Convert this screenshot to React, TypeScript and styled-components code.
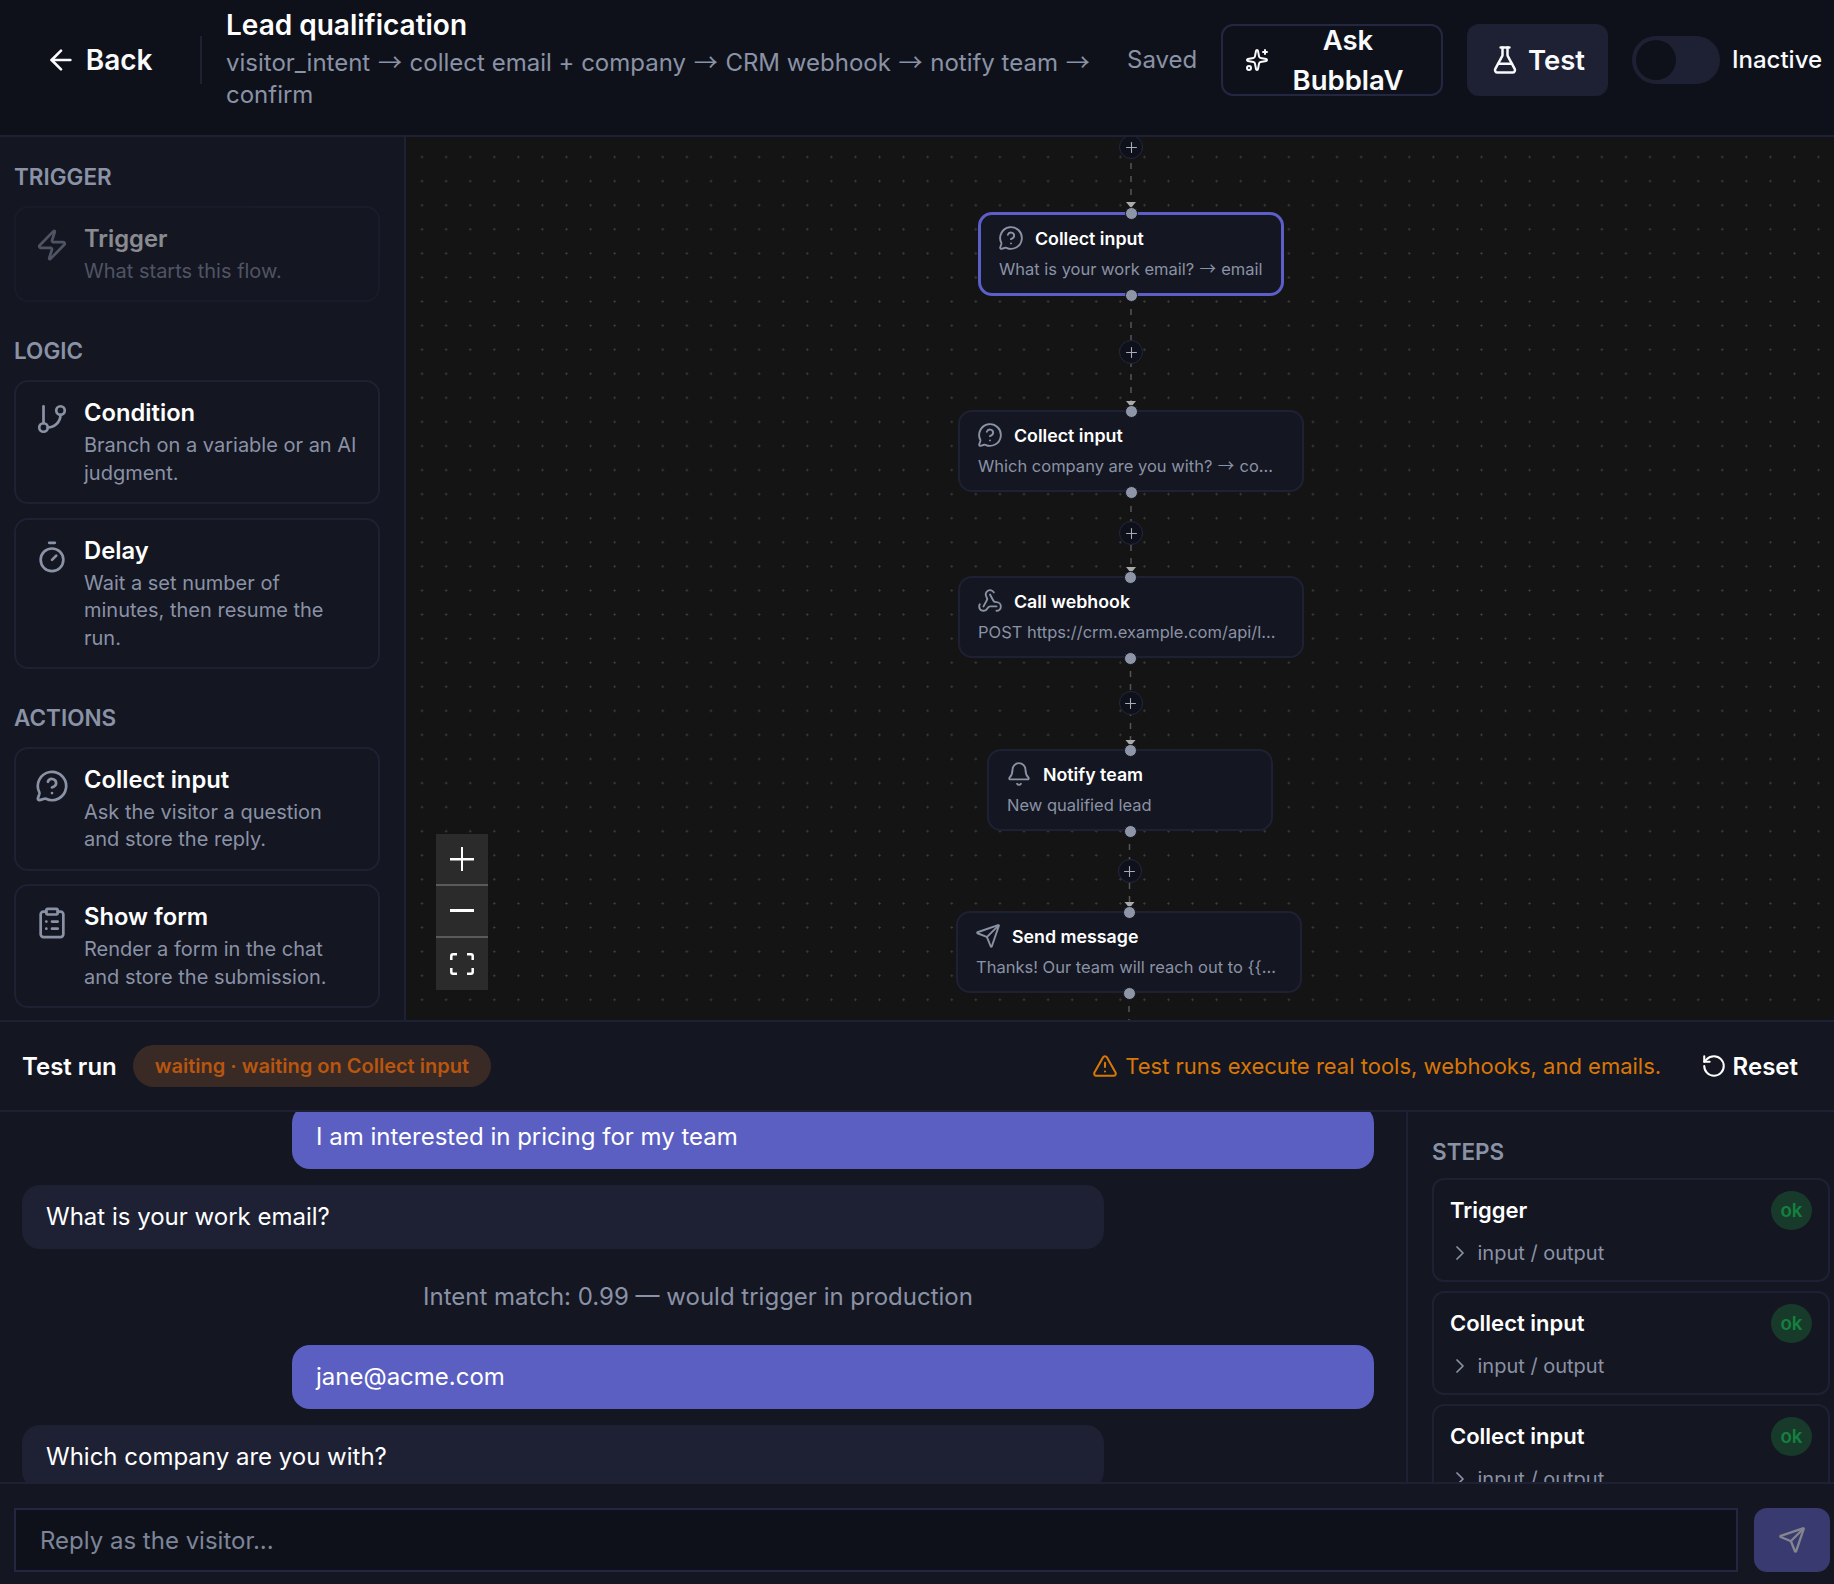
import React from "react";
import styled, { createGlobalStyle } from "styled-components";
import {
  ArrowLeft, Sparkles, FlaskConical, Zap, GitBranch, Timer, MessageCircleQuestion,
  ClipboardList, Webhook, Bell, Send, Plus, TriangleAlert, RotateCcw, ChevronRight,
} from "lucide-react";

const Global = createGlobalStyle`
  html, body { margin: 0; padding: 0; background: #141621; }
  * { box-sizing: border-box; }
  body { font-family: Inter, "Noto Sans", "Liberation Sans", sans-serif; color: #f8fafc; }
`;

const Page = styled.div`
  width: 1834px; height: 1584px; display: flex; flex-direction: column; overflow: hidden; background: #141621;
`;
const Arrow = styled.span`
  font-family: "Noto Sans CJK SC", sans-serif;
  margin: 0 0.04em;
  line-height: 0;
`;

/* header */
const Header = styled.header`
  height: 137px; flex: none; display: flex; align-items: center; background: #0f111a;
  border-bottom: 2px solid #1e2133; padding: 0 12px 16px 44.7px;
`;
const BackButton = styled.div`
  display: flex; align-items: center; gap: 9px; font-size: 28px; font-weight: 600; width: 155.3px; flex: none;
`;
const Divider = styled.div`
  width: 2px; height: 48px; background: #1e2133; flex: none; margin-right: 24px;
`;
const TitleBlock = styled.div`
  flex: none; width: 877px; align-self: flex-start; padding-top: 8px;
`;
const Title = styled.div`
  font-size: 28px; font-weight: 600; line-height: 34px; color: #fff; margin-bottom: 5px;
`;
const Subtitle = styled.div`
  font-size: 24px; line-height: 32px; color: #8a92a6;
`;
const Saved = styled.div`
  font-size: 24px; color: #8a92a6; margin-left: 24px; width: 70px; flex: none;
`;
const AskButton = styled.div`
  margin-left: 24px; width: 222px; height: 72px; flex: none; display: flex; align-items: center; gap: 7px;
  border: 2px solid #232741; border-radius: 12px; padding: 0 21px 0 22px; font-size: 27.5px; font-weight: 600;
`;
const AskText = styled.div`
  flex: 1; text-align: center; line-height: 40px;
`;
const TestButton = styled.div`
  margin-left: 24px; width: 141px; height: 72px; flex: none; display: flex; align-items: center; justify-content: center; gap: 8px;
  background: #1e2133; border-radius: 12px; font-size: 27.5px; font-weight: 600;
`;
const Toggle = styled.div`
  margin-left: 24px; width: 88px; height: 48px; flex: none; border-radius: 24px; background: #1e2133; padding: 4px;
`;
const Thumb = styled.div`
  width: 40px; height: 40px; border-radius: 50%; background: #0f111a;
`;
const ToggleLabel = styled.div`
  margin-left: 12px; font-size: 24px; font-weight: 500; white-space: nowrap;
`;

/* main */
const Main = styled.div`
  height: 883px; flex: none; display: flex;
`;
const Sidebar = styled.aside`
  width: 406px; flex: none; border-right: 2px solid #1e2133; background: #141621; padding: 27px 24px 0 14px; overflow: hidden;
`;
const SectionLabel = styled.div`
  font-size: 22.5px; font-weight: 600; line-height: 26px; color: #8a92a6;
`;
const CardList = styled.div`
  display: flex; flex-direction: column; gap: 13.5px; margin: 16px 0 36px;
`;
const PaletteCard = styled.div<{ $disabled?: boolean }>`
  display: flex; gap: 15.5px; padding: 16px 18px 15px 18.5px; border: 2px solid #1e2133; border-radius: 14px;
  opacity: ${(p) => (p.$disabled ? 0.5 : 1)};
  svg { flex: none; color: #8a92a6; margin-top: 4px; }
`;
const CardTitle = styled.div`
  font-size: 23.75px; font-weight: 600; line-height: 30px; color: #fff; margin-bottom: 4px;
`;
const CardDesc = styled.div`
  font-size: 20px; line-height: 27.4px; color: #8a92a6;
`;

/* canvas */
const Canvas = styled.div`
  flex: 1; position: relative; overflow: hidden; background-color: #141414;
  background-image: radial-gradient(circle at center, #3e3e3e 0.9px, transparent 1.2px);
  background-size: 24.08px 24.08px;
  background-position: 4px 8px;
`;
const EdgeLayer = styled.svg`
  position: absolute; left: 0; top: 0; width: 100%; height: 100%;
`;
const Node = styled.div<{ $x: number; $y: number; $w: number; $h: number; $selected?: boolean }>`
  position: absolute; left: ${(p) => p.$x - 406}px; top: ${(p) => p.$y - 137}px; width: ${(p) => p.$w}px; height: ${(p) => p.$h}px;
  background: #141621; border-radius: 14px; padding: 0 18px;
  border: ${(p) => (p.$selected ? "3px solid #5b5fc7" : "2px solid #1e2133")};
`;
const NodeHead = styled.div`
  display: flex; align-items: center; gap: 11px; height: 24px; margin-top: 11px;
  font-size: 17.8px; font-weight: 600; color: #fff;
  svg { color: #8a92a6; flex: none; margin-left: -1px; }
`;
const NodeDesc = styled.div`
  margin-top: 7px; font-size: 16.5px; line-height: 24px; color: #8a92a6; white-space: nowrap;
`;
const Handle = styled.div<{ $x: number; $y: number }>`
  position: absolute; left: ${(p) => p.$x - 406 - 6.5}px; top: ${(p) => p.$y - 137 - 6.5}px; width: 13px; height: 13px;
  border-radius: 50%; background: #8e95a6; border: 1.5px solid #141621;
`;
const AddButton = styled.div<{ $x: number; $y: number }>`
  position: absolute; left: ${(p) => p.$x - 406 - 12}px; top: ${(p) => p.$y - 137 - 12}px; width: 24px; height: 24px;
  border-radius: 50%; background: #0f111a; border: 1.5px solid #232741; display: flex; align-items: center; justify-content: center;
  color: #a5acbd;
`;
const ZoomControls = styled.div`
  position: absolute; left: 30px; top: 697px; width: 52px; display: flex; flex-direction: column; background: #2b2b2b;
`;
const ZoomButton = styled.div`
  height: 52px; display: flex; align-items: center; justify-content: center; color: #fff;
  &:not(:last-child) { border-bottom: 2px solid #5a5a5a; }
`;

/* test panel */
const Panel = styled.section`
  flex: 1; min-height: 0; display: flex; flex-direction: column; border-top: 2px solid #1e2133; background: #141621;
`;
const PanelHead = styled.div`
  height: 90px; flex: none; display: flex; align-items: center; padding: 0 36px 0 22px; border-bottom: 2px solid #1e2133;
`;
const PanelTitle = styled.div`
  font-size: 24px; font-weight: 600; color: #fff;
`;
const StatusBadge = styled.div`
  margin-left: 16px; height: 42px; border-radius: 21px; background: #3a2a26; color: #b8560f; padding: 0 22px;
  display: flex; align-items: center; font-size: 20px; font-weight: 600;
`;
const Warning = styled.div`
  margin-left: auto; display: flex; align-items: center; gap: 7px; color: #d97706; font-size: 22px;
`;
const ResetButton = styled.div`
  margin-left: 39.5px; display: flex; align-items: center; gap: 6px; font-size: 24px; font-weight: 600; color: #fff;
`;
const PanelBody = styled.div`
  flex: 1; min-height: 0; display: flex;
`;
const Chat = styled.div`
  width: 1406px; flex: none; overflow: hidden; padding: 0 32px 0 22px; display: flex; flex-direction: column; gap: 16px;
`;
const Bubble = styled.div<{ $user?: boolean }>`
  flex: none; width: 1082px; height: 64px; padding: 0 24px 2px; display: flex; align-items: center; border-radius: 18px;
  font-size: 24px; color: #fff;
  background: ${(p) => (p.$user ? "#5b5fc2" : "#1e2133")};
  align-self: ${(p) => (p.$user ? "flex-end" : "flex-start")};
  &:first-child { margin-top: -7px; }
`;
const Meta = styled.div`
  flex: none; height: 64px; padding-bottom: 2px; display: flex; align-items: center; justify-content: center; font-size: 24px; color: #8a92a6;
`;
const Steps = styled.div`
  flex: 1; min-width: 0; overflow: hidden; border-left: 2px solid #1e2133; padding: 27px 4px 0 24px;
`;
const StepsList = styled.div`
  margin-top: 13px; display: flex; flex-direction: column; gap: 9px;
`;
const StepCard = styled.div`
  flex: none; height: 104px; border: 2px solid #1e2133; border-radius: 12px; padding: 10px 16px 0 16px;
`;
const StepHead = styled.div`
  display: flex; align-items: center; justify-content: space-between; font-size: 22px; font-weight: 600; height: 40px; color: #fff;
`;
const OkBadge = styled.div`
  width: 41px; height: 39px; border-radius: 50%; background: #173a2b; color: #15803d; display: flex; align-items: center; justify-content: center;
  font-size: 18.7px; font-weight: 600;
`;
const StepIO = styled.div`
  display: flex; align-items: center; gap: 5.5px; margin-top: 3px; margin-left: -2px; height: 40px; font-size: 20px; color: #8a92a6;
`;
const InputRow = styled.div`
  height: 102px; flex: none; border-top: 2px solid #1e2133; display: flex; gap: 16px; padding: 24px 4px 12px 14px;
`;
const ReplyBox = styled.div`
  flex: 1; background: #0f111a; border: 2px solid #232741; display: flex; align-items: center; padding: 0 24px; font-size: 24px; color: #7d8599;
`;
const SendButton = styled.div`
  width: 76px; flex: none; border-radius: 13px; background: #393a70; color: #85858f; display: flex; align-items: center; justify-content: center;
`;

const palette = [
  { label: "TRIGGER", items: [{ Icon: Zap, title: "Trigger", desc: "What starts this flow.", disabled: true }] },
  {
    label: "LOGIC",
    items: [
      { Icon: GitBranch, title: "Condition", desc: "Branch on a variable or an AI judgment." },
      { Icon: Timer, title: "Delay", desc: "Wait a set number of minutes, then resume the run." },
    ],
  },
  {
    label: "ACTIONS",
    items: [
      { Icon: MessageCircleQuestion, title: "Collect input", desc: "Ask the visitor a question and store the reply." },
      { Icon: ClipboardList, title: "Show form", desc: "Render a form in the chat and store the submission." },
    ],
  },
];

const nodes = [
  { Icon: MessageCircleQuestion, title: "Collect input", desc: "What is your work email? → email", x: 978, y: 212, w: 306, h: 84, hx: 1131, selected: true },
  { Icon: MessageCircleQuestion, title: "Collect input", desc: "Which company are you with? → co...", x: 958, y: 410, w: 346, h: 82, hx: 1131 },
  { Icon: Webhook, title: "Call webhook", desc: "POST https://crm.example.com/api/l...", x: 958, y: 576, w: 346, h: 82, hx: 1130.5 },
  { Icon: Bell, title: "Notify team", desc: "New qualified lead", x: 987, y: 749, w: 286, h: 82, hx: 1130 },
  { Icon: Send, title: "Send message", desc: "Thanks! Our team will reach out to {{...", x: 956, y: 911, w: 346, h: 82, hx: 1129 },
];
const edges = [
  [1131, 137, 204], [1131, 296, 403], [1131, 493, 569], [1130.5, 658, 742], [1129.5, 831, 904], [1129, 993, 1020],
];
const adds = [[1131, 147], [1131, 352], [1131, 533], [1130.5, 703], [1129.5, 871]];
const steps = ["Trigger", "Collect input", "Collect input"];

function withArrows(text: string) {
  return text.split("→").map((part, i) => (
    <React.Fragment key={i}>
      {i > 0 && <Arrow>→</Arrow>}
      {part}
    </React.Fragment>
  ));
}

export default function App() {
  return (
    <Page>
      <Global />
      <Header>
        <BackButton><ArrowLeft size={32} strokeWidth={2} />Back</BackButton>
        <Divider />
        <TitleBlock>
          <Title>Lead qualification</Title>
          <Subtitle>{withArrows("visitor_intent → collect email + company → CRM webhook → notify team → confirm")}</Subtitle>
        </TitleBlock>
        <Saved>Saved</Saved>
        <AskButton><Sparkles size={24} /><AskText>Ask BubblaV</AskText></AskButton>
        <TestButton><FlaskConical size={30} />Test</TestButton>
        <Toggle><Thumb /></Toggle>
        <ToggleLabel>Inactive</ToggleLabel>
      </Header>
      <Main>
        <Sidebar>
          {palette.map((s) => (
            <div key={s.label}>
              <SectionLabel>{s.label}</SectionLabel>
              <CardList>
                {s.items.map(({ Icon, title, desc, disabled }: any) => (
                  <PaletteCard key={title} $disabled={disabled}>
                    <Icon size={34} strokeWidth={1.9} />
                    <div>
                      <CardTitle>{title}</CardTitle>
                      <CardDesc>{desc}</CardDesc>
                    </div>
                  </PaletteCard>
                ))}
              </CardList>
            </div>
          ))}
        </Sidebar>
        <Canvas>
          <EdgeLayer>
            {edges.map(([x, y1, y2]) => (
              <g key={y1}>
                <line x1={x - 406} x2={x - 406} y1={y1 - 137} y2={y2 - 137} stroke="#555" strokeWidth={1.5} strokeDasharray="6 7" />
                {y2 < 1000 && <polygon points={`${x - 411},${y2 - 137 - 2} ${x - 401},${y2 - 137 - 2} ${x - 406},${y2 - 137 + 4}`} fill="#aaa" />}
              </g>
            ))}
          </EdgeLayer>
          {nodes.map(({ Icon, title, desc, x, y, w, h, hx, selected }) => (
            <React.Fragment key={y}>
              <Node $x={x} $y={y} $w={w} $h={h} $selected={selected}>
                <NodeHead><Icon size={26} strokeWidth={1.75} />{title}</NodeHead>
                <NodeDesc>{withArrows(desc)}</NodeDesc>
              </Node>
              <Handle $x={hx} $y={y + 1} />
              <Handle $x={hx} $y={y + h - (selected ? 1 : 0)} />
            </React.Fragment>
          ))}
          {adds.map(([x, y]) => (
            <AddButton key={y} $x={x} $y={y}><Plus size={17} strokeWidth={1.5} /></AddButton>
          ))}
          <ZoomControls>
            <ZoomButton>
              <svg width="24" height="24" viewBox="0 0 24 24"><path d="M0 11h11V0h2v11h11v2.5H13V24h-2V13.5H0z" fill="#fff" /></svg>
            </ZoomButton>
            <ZoomButton>
              <svg width="24" height="4" viewBox="0 0 24 4"><rect width="24" height="3" fill="#fff" /></svg>
            </ZoomButton>
            <ZoomButton>
              <svg width="24" height="22" viewBox="0 0 24 22" fill="none" stroke="#fff" strokeWidth="2.5">
                <path d="M7 1.3H3Q1.3 1.3 1.3 3V7M17 1.3h4Q22.7 1.3 22.7 3V7M7 20.7H3Q1.3 20.7 1.3 19V15M17 20.7h4Q22.7 20.7 22.7 19V15" />
              </svg>
            </ZoomButton>
          </ZoomControls>
        </Canvas>
      </Main>
      <Panel>
        <PanelHead>
          <PanelTitle>Test run</PanelTitle>
          <StatusBadge>waiting · waiting on Collect input</StatusBadge>
          <Warning><TriangleAlert size={26} strokeWidth={1.9} />Test runs execute real tools, webhooks, and emails.</Warning>
          <ResetButton><RotateCcw size={26} strokeWidth={1.9} />Reset</ResetButton>
        </PanelHead>
        <PanelBody>
          <Chat>
            <Bubble $user>I am interested in pricing for my team</Bubble>
            <Bubble>What is your work email?</Bubble>
            <Meta>Intent match: 0.99 — would trigger in production</Meta>
            <Bubble $user>jane@acme.com</Bubble>
            <Bubble>Which company are you with?</Bubble>
          </Chat>
          <Steps>
            <SectionLabel>STEPS</SectionLabel>
            <StepsList>
              {steps.map((s, i) => (
                <StepCard key={i}>
                  <StepHead>{s}<OkBadge>ok</OkBadge></StepHead>
                  <StepIO><ChevronRight size={24} strokeWidth={1.75} />input / output</StepIO>
                </StepCard>
              ))}
            </StepsList>
          </Steps>
        </PanelBody>
        <InputRow>
          <ReplyBox>Reply as the visitor...</ReplyBox>
          <SendButton><Send size={28} /></SendButton>
        </InputRow>
      </Panel>
    </Page>
  );
}
